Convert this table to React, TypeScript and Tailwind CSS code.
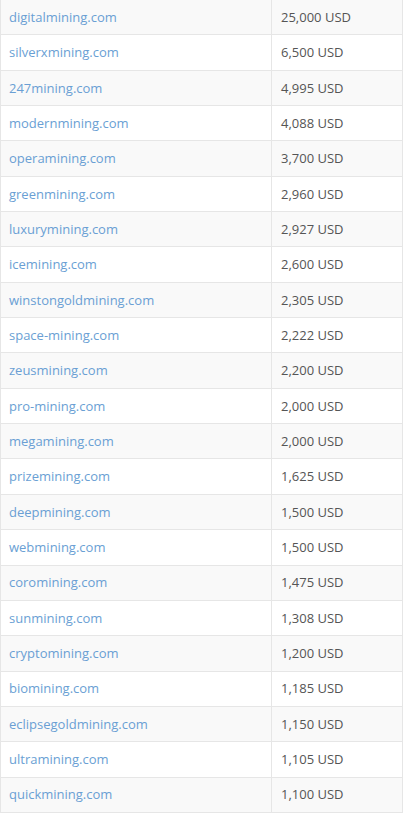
import React from "react";

const rows: [string, string][] = [
  ["digitalmining.com", "25,000 USD"],
  ["silverxmining.com", "6,500 USD"],
  ["247mining.com", "4,995 USD"],
  ["modernmining.com", "4,088 USD"],
  ["operamining.com", "3,700 USD"],
  ["greenmining.com", "2,960 USD"],
  ["luxurymining.com", "2,927 USD"],
  ["icemining.com", "2,600 USD"],
  ["winstongoldmining.com", "2,305 USD"],
  ["space-mining.com", "2,222 USD"],
  ["zeusmining.com", "2,200 USD"],
  ["pro-mining.com", "2,000 USD"],
  ["megamining.com", "2,000 USD"],
  ["prizemining.com", "1,625 USD"],
  ["deepmining.com", "1,500 USD"],
  ["webmining.com", "1,500 USD"],
  ["coromining.com", "1,475 USD"],
  ["sunmining.com", "1,308 USD"],
  ["cryptomining.com", "1,200 USD"],
  ["biomining.com", "1,185 USD"],
  ["eclipsegoldmining.com", "1,150 USD"],
  ["ultramining.com", "1,105 USD"],
  ["quickmining.com", "1,100 USD"],
];

export default function App() {
  return (
    <div className="h-[813px] w-[408px] overflow-hidden bg-white font-['Open_Sans',sans-serif] text-[13px]">
      <div className="w-[403px] border-x border-[#e6e6e6]">
        {rows.map(([domain, price], i) => (
          <div
            key={domain}
            className={`flex h-[35.35px] border-b border-[#e6e6e6] ${i % 2 === 0 ? "bg-[#f9f9f9]" : "bg-white"}`}
          >
            <div className="flex w-[271px] items-center border-r border-[#e6e6e6] pl-[8px] pt-px">
              <a href="#" className="text-[#6a9fd4]">{domain}</a>
            </div>
            <div className="flex flex-1 items-center pl-[9px] pt-px text-[#555555]">{price}</div>
          </div>
        ))}
      </div>
    </div>
  );
}
